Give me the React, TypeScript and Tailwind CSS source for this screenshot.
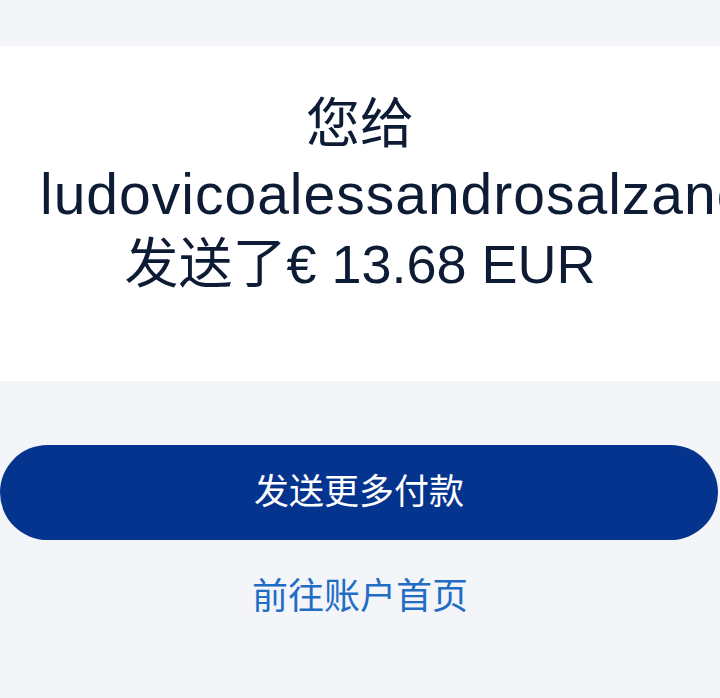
const cjk = "font-['Liberation_Sans','Noto_Sans_CJK_SC',sans-serif]";

export default function App() {
  const recipient = "ludovicoalessandrosalzano";
  const amount = "€ 13.68 EUR";

  return (
    <div className={`h-[698px] w-full overflow-hidden bg-[#f4f5f9] ${cjk}`}>
      {/* top strip */}
      <div className="h-[46px]" />

      {/* confirmation card */}
      <section className="bg-white px-10 pt-[43px] pb-[82px] text-center text-[#0d1b35]">
        <h1 className="text-[54px] leading-[70px] font-normal">您给</h1>
        <p className="text-[57px] leading-[70px] tracking-[1px] whitespace-nowrap text-left">{recipient}</p>
        <p className="text-[54px] leading-[70px]">
          发送了{amount}
        </p>
      </section>

      {/* actions */}
      <div className="mt-16 flex flex-col items-center">
        <button className="flex h-[95px] w-[718px] self-start items-center justify-center rounded-full bg-[#05348f] text-[35px] text-white">
          发送更多付款
        </button>
        <a href="#" className="mt-[33px] text-[36px] leading-[48px] text-[#1f6dc4]">
          前往账户首页
        </a>
      </div>
    </div>
  );
}
